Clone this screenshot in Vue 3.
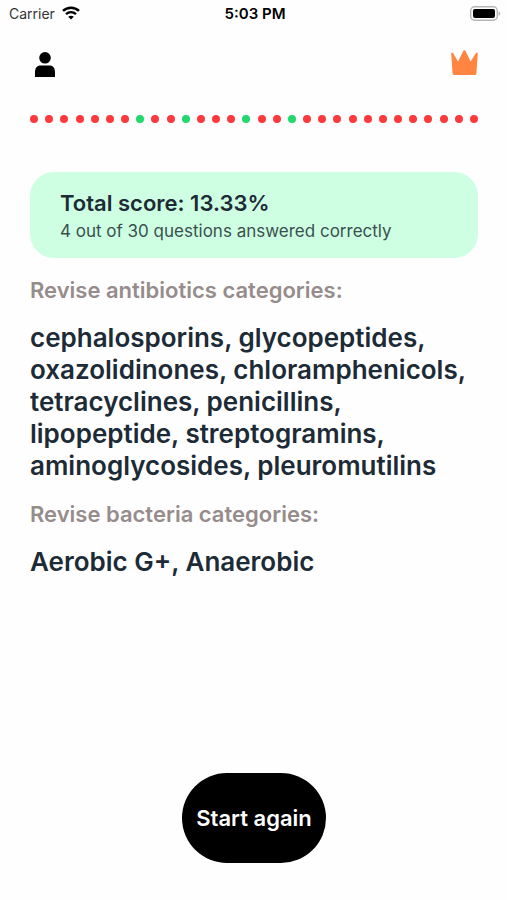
<template>
  <div class="screen">
    <div class="status-bar">
      <div class="status-bar__carrier">
        <span>Carrier</span>
        <svg class="status-bar__wifi" viewBox="0 0 18 14" fill="none" aria-hidden="true">
          <path d="M1 4.9C5.5 0.7 12.5 0.7 17 4.9" stroke="#000" stroke-width="2.6" />
          <path d="M4 8.2C6.9 5.5 11.1 5.5 14 8.2" stroke="#000" stroke-width="2.4" />
          <path d="M9 13.6L6.2 10.7C7.8 9.3 10.2 9.3 11.8 10.7Z" fill="#000" />
        </svg>
      </div>
      <span class="status-bar__time">5:03 PM</span>
      <svg class="status-bar__battery" viewBox="0 0 31 15" aria-hidden="true">
        <rect x="0.7" y="0.7" width="26.6" height="13.6" rx="4" fill="#fff" stroke="#b5b5b5" stroke-width="1.4" />
        <rect x="3" y="3" width="22" height="9" rx="2" fill="#000" />
        <path d="M28.6 5.2C30.8 6 30.8 9 28.6 9.8Z" fill="#b5b5b5" />
      </svg>
    </div>

    <header class="header">
      <button type="button" class="icon-btn" aria-label="Profile">
        <svg class="header__user" viewBox="0 0 20 25" aria-hidden="true">
          <circle cx="10" cy="5.8" r="5.8" fill="#000" />
          <path d="M0 25V20.5C0 15.8 2 13.4 5.6 13.4H14.4C18 13.4 20 15.8 20 20.5V25Z" fill="#000" />
        </svg>
      </button>
      <button type="button" class="icon-btn icon-btn--top" aria-label="Premium">
        <svg class="header__crown" viewBox="0 0 27 25" aria-hidden="true">
          <path
            d="M0.2 3.4C0.2 2.4 1.4 2.2 2 3.1L7 11.6L12.4 0.8C12.8 0 14 0 14.4 0.8L19.6 11.6L25 3.1C25.6 2.2 26.8 2.4 26.8 3.4L25.4 23.6C25.3 24.5 24.9 25 24 25H3C2.1 25 1.7 24.5 1.6 23.6Z"
            fill="#ff8540"
          />
        </svg>
      </button>
    </header>

    <main class="main">
      <ul class="progress" aria-label="Answers">
        <li
          v-for="n in total"
          :key="n"
          class="progress__dot"
          :class="{ 'progress__dot--correct': correctAnswers.includes(n) }"
        ></li>
      </ul>

      <section class="score">
        <h1 class="score__title">Total score: {{ score }}%</h1>
        <p class="score__text">{{ correctAnswers.length }} out of {{ total }} questions answered correctly</p>
      </section>

      <section v-for="group in groups" :key="group.title" class="revise">
        <h2 class="revise__title">{{ group.title }}</h2>
        <p class="revise__list">{{ group.items.join(", ") }}</p>
      </section>

      <button type="button" class="start-btn">Start again</button>
    </main>
  </div>
</template>

<script setup>
import { computed } from "vue";

const total = 30;
const correctAnswers = [8, 11, 15, 18];

const score = computed(() => ((correctAnswers.length / total) * 100).toFixed(2));

const groups = [
  {
    title: "Revise antibiotics categories:",
    items: [
      "cephalosporins",
      "glycopeptides",
      "oxazolidinones",
      "chloramphenicols",
      "tetracyclines",
      "penicillins",
      "lipopeptide",
      "streptogramins",
      "aminoglycosides",
      "pleuromutilins",
    ],
  },
  {
    title: "Revise bacteria categories:",
    items: ["Aerobic G+", "Anaerobic"],
  },
];
</script>

<style>
body {
  background-color: #fefefe;
}
</style>

<style scoped>
.screen {
  display: flex;
  flex-direction: column;
  min-height: 100vh;
  box-sizing: border-box;
  padding-bottom: 37px;
  font-family: Inter, "Liberation Sans", sans-serif;
  color: #1c2b36;
}

h1,
h2,
p,
ul {
  margin: 0;
  padding: 0;
}

.status-bar {
  display: grid;
  grid-template-columns: 1fr auto 1fr;
  align-items: center;
  height: 26px;
  padding: 0 6px 0 9px;
  font-size: 14px;
  color: #000;
}

.status-bar__carrier {
  display: flex;
  align-items: center;
  gap: 7px;
  color: #333;
}

.status-bar__wifi {
  width: 18px;
  height: 14px;
}

.status-bar__time {
  font-size: 15px;
  font-weight: 600;
}

.status-bar__battery {
  justify-self: end;
  width: 31px;
  height: 15px;
}

.header {
  display: flex;
  justify-content: space-between;
  align-items: flex-end;
  height: 27px;
  padding: 24px 29px 0 35px;
}

.icon-btn {
  display: flex;
  padding: 0;
  border: none;
  background: none;
  cursor: pointer;
}

.icon-btn--top {
  align-self: flex-start;
}

.header__user {
  width: 20px;
  height: 25px;
}

.header__crown {
  width: 27px;
  height: 25px;
}

.main {
  display: flex;
  flex-direction: column;
  flex-grow: 1;
  padding: 38px 29px 0 30px;
}

.progress {
  display: flex;
  justify-content: space-between;
  list-style: none;
}

.progress__dot {
  width: 8px;
  height: 8px;
  border-radius: 50%;
  background-color: #fb3a3d;
}

.progress__dot--correct {
  background-color: #22d76c;
}

.score {
  margin-top: 49px;
  padding: 16px 30px 14px;
  border-radius: 24px;
  background-color: #ceffe2;
}

.score__title {
  font-size: 22px;
  font-weight: 600;
  line-height: 30px;
}

.score__text {
  font-size: 17px;
  line-height: 26px;
  color: #3a504f;
}

.revise {
  margin-top: 16px;
}

.revise__title {
  font-size: 22px;
  font-weight: 600;
  line-height: 32px;
  color: #968c8c;
}

.revise__list {
  margin-top: 16px;
  font-size: 26px;
  font-weight: 600;
  line-height: 32px;
}

.start-btn {
  align-self: center;
  margin-top: auto;
  height: 90px;
  padding: 0 14px;
  border: none;
  border-radius: 45px;
  background-color: #000;
  color: #fff;
  font-family: inherit;
  font-size: 22px;
  font-weight: 600;
  cursor: pointer;
}
</style>
